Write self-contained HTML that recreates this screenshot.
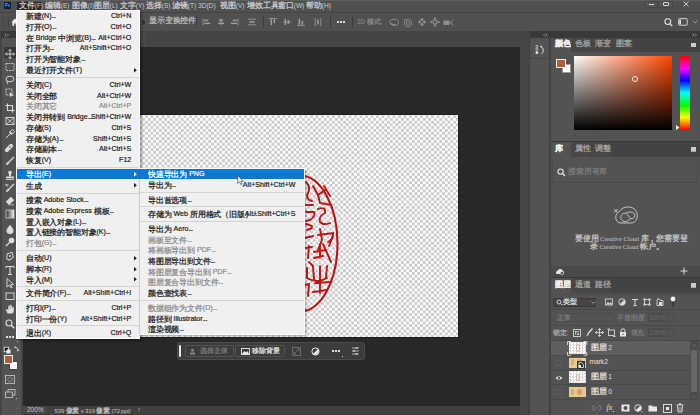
<!DOCTYPE html><html><head><meta charset="utf-8"><style>
html,body{margin:0;padding:0;}
body{width:700px;height:415px;overflow:hidden;position:relative;background:#282828;font-family:"Liberation Sans",sans-serif;}
div{position:absolute;box-sizing:border-box;}
.t{white-space:nowrap;line-height:1.2;}
.e{letter-spacing:-0.55px;}
.c{font-family:"Liberation Sans",sans-serif;font-size:1.18em;line-height:0;letter-spacing:-0.02em;vertical-align:-0.06em;-webkit-text-stroke:0.25px;}
svg{position:absolute;overflow:visible;}
</style></head><body>
<div style="left:0px;top:0px;width:700px;height:31px;background:#505050;"></div>
<div style="left:0px;top:0px;width:700px;height:12.5px;background:#505050;"></div>
<div style="left:0px;top:0px;width:700px;height:1.2px;background:#5e5e5e;"></div>
<div style="left:0px;top:12.2px;width:700px;height:1.3px;background:#444444;"></div>
<div style="left:4px;top:2px;width:7px;height:6.5px;background:#001e36;border-radius:1px;"><div class="t" style="left:0.8px;top:0.6px;font-size:4.6px;font-weight:bold;color:#31a8ff;">Ps</div></div>
<div style="left:17px;top:1.8px;width:23.5px;height:7.8px;background:#262626;"></div>
<div class="t" style="left:19px;top:1.51px;font-size:6.6px;color:#cfcfcf;"><span class="c">文件</span>(F)</div>
<div class="t" style="left:45px;top:1.51px;font-size:6.6px;color:#cfcfcf;"><span class="c">编辑</span>(E)</div>
<div class="t" style="left:72px;top:1.51px;font-size:6.6px;color:#cfcfcf;"><span class="c">图像</span>(I)</div>
<div class="t" style="left:94px;top:1.51px;font-size:6.6px;color:#cfcfcf;"><span class="c">图层</span>(L)</div>
<div class="t" style="left:120px;top:1.51px;font-size:6.6px;color:#cfcfcf;"><span class="c">文字</span>(Y)</div>
<div class="t" style="left:146px;top:1.51px;font-size:6.6px;color:#cfcfcf;"><span class="c">选择</span>(S)</div>
<div class="t" style="left:172px;top:1.51px;font-size:6.6px;color:#cfcfcf;"><span class="c">滤镜</span>(T)</div>
<div class="t" style="left:198px;top:1.51px;font-size:6.6px;color:#cfcfcf;">3D(D)</div>
<div class="t" style="left:220px;top:1.51px;font-size:6.6px;color:#cfcfcf;"><span class="c">视图</span>(V)</div>
<div class="t" style="left:247px;top:1.51px;font-size:6.6px;color:#cfcfcf;"><span class="c">增效工具</span></div>
<div class="t" style="left:278px;top:1.51px;font-size:6.6px;color:#cfcfcf;"><span class="c">窗口</span>(W)</div>
<div class="t" style="left:306px;top:1.51px;font-size:6.6px;color:#cfcfcf;"><span class="c">帮助</span>(H)</div>
<div style="left:644.7px;top:0.6px;width:13.7px;height:7.6px;background:#555555;border:0.7px solid #474747;border-radius:1px;"></div>
<div style="left:658.4px;top:0.6px;width:15px;height:7.6px;background:#555555;border:0.7px solid #474747;border-radius:1px;"></div>
<div style="left:649px;top:4.3px;width:5.1px;height:1.2px;background:#d6d6d6;"></div>
<div style="left:663.2px;top:2.2px;width:5.8px;height:3.4px;border:1px solid #d6d6d6;border-radius:1px;"></div>
<svg style="left:682.5px;top:1.2px" width="7" height="6"><path d="M0.6 0.5L5.6 5.3M5.6 0.5L0.6 5.3" stroke="#dcdcdc" stroke-width="0.9"/></svg>
<div style="left:3.4px;top:16.5px;width:1px;height:10px;background:#434343;"></div>
<div style="left:7.5px;top:16.5px;width:1px;height:10px;background:#434343;"></div>
<svg style="left:10.5px;top:17.5px" width="8" height="8"><path d="M0.3 4.2L4 0.6L7.7 4.2H6.6V7.8H4.8V5.4H3.2V7.8H1.4V4.2Z" fill="#ececec"/></svg>
<div style="left:140.5px;top:19.2px;width:5px;height:6.5px;background:#333;border:0.8px solid #5c5c5c;border-radius:1px;"></div>
<div class="t" style="left:149px;top:17.26px;font-size:7px;color:#bdbdbd;"><span class="c">显示变换控件</span></div>
<div style="left:196px;top:15.5px;width:0.9px;height:12.5px;background:#3c3c3c;"></div>
<div style="left:263px;top:15.5px;width:0.9px;height:12.5px;background:#3c3c3c;"></div>
<div style="left:330px;top:15.5px;width:0.9px;height:12.5px;background:#3c3c3c;"></div>
<div style="left:352px;top:15.5px;width:0.9px;height:12.5px;background:#3c3c3c;"></div>
<svg style="left:201.5px;top:17.2px" width="10" height="10"><path d="M1 1.5V8.5" stroke="#9e9e9e" stroke-width="0.8"/><rect x="2.2" y="2.6" width="4" height="1.5" fill="#9e9e9e"/><rect x="2.2" y="5.6" width="6" height="1.5" fill="#9e9e9e"/></svg>
<svg style="left:215.5px;top:17.2px" width="10" height="10"><path d="M5 1.5V8.5" stroke="#9e9e9e" stroke-width="0.8"/><rect x="3" y="2.6" width="4" height="1.5" fill="#9e9e9e"/><rect x="2" y="5.6" width="6" height="1.5" fill="#9e9e9e"/></svg>
<svg style="left:229.4px;top:17.2px" width="10" height="10"><path d="M9 1.5V8.5" stroke="#9e9e9e" stroke-width="0.8"/><rect x="3.8" y="2.6" width="4" height="1.5" fill="#9e9e9e"/><rect x="1.8" y="5.6" width="6" height="1.5" fill="#9e9e9e"/></svg>
<svg style="left:246.6px;top:17.2px" width="10" height="10"><path d="M1 2.2H9M1 7.8H9" stroke="#9e9e9e" stroke-width="0.8"/><rect x="2.5" y="4.2" width="5" height="1.6" fill="#9e9e9e"/></svg>
<svg style="left:268px;top:17.2px" width="10" height="10"><path d="M1 1.5H9" stroke="#9e9e9e" stroke-width="0.8"/><rect x="2.6" y="2.2" width="1.5" height="6" fill="#9e9e9e"/><rect x="5.6" y="2.2" width="1.5" height="4" fill="#9e9e9e"/></svg>
<svg style="left:282px;top:17.2px" width="10" height="10"><path d="M1 5H9" stroke="#9e9e9e" stroke-width="0.8"/><rect x="2.6" y="2" width="1.5" height="6" fill="#9e9e9e"/><rect x="5.6" y="3" width="1.5" height="4" fill="#9e9e9e"/></svg>
<svg style="left:296px;top:17.2px" width="10" height="10"><path d="M1 8.5H9" stroke="#9e9e9e" stroke-width="0.8"/><rect x="2.6" y="1.8" width="1.5" height="6" fill="#9e9e9e"/><rect x="5.6" y="3.8" width="1.5" height="4" fill="#9e9e9e"/></svg>
<svg style="left:313px;top:17.2px" width="10" height="10"><path d="M2.2 1V9M7.8 1V9" stroke="#9e9e9e" stroke-width="0.8"/><rect x="4.2" y="2.5" width="1.6" height="5" fill="#9e9e9e"/></svg>
<div style="left:337.2px;top:21.2px;width:1.6px;height:1.6px;background:#dcdcdc;"></div>
<div style="left:340.2px;top:21.2px;width:1.6px;height:1.6px;background:#dcdcdc;"></div>
<div style="left:343.2px;top:21.2px;width:1.6px;height:1.6px;background:#dcdcdc;"></div>
<div class="t" style="left:357px;top:18.09px;font-size:6.3px;color:#8a8a8a;">3D <span class="c">模式</span>:</div>
<svg style="left:388px;top:17px" width="12" height="10"><path d="M2 4.5Q3 1.5 6 2.5Q8.5 0.8 10 3.5Q11.5 6 9.5 8Q7 9 4.5 8Q1.5 7.5 2 4.5Z" fill="none" stroke="#8e8e8e" stroke-width="0.9"/><path d="M3 6.5Q5 8.5 7 7" stroke="#8e8e8e" stroke-width="1.2" fill="none"/></svg>
<svg style="left:402.5px;top:17.5px" width="10" height="10"><circle cx="5" cy="5" r="3.8" fill="none" stroke="#8e8e8e" stroke-width="0.9"/><circle cx="5" cy="5" r="1.6" fill="none" stroke="#8e8e8e" stroke-width="0.9"/><path d="M1.5 1L3 2.5" stroke="#8e8e8e" stroke-width="0.9"/></svg>
<svg style="left:416.5px;top:17px" width="10" height="10"><path d="M5 0.8L6.8 2.6L5 4.4L3.2 2.6ZM5 5.6L6.8 7.4L5 9.2L3.2 7.4ZM0.8 5L2.6 3.2L4.4 5L2.6 6.8ZM5.6 5L7.4 3.2L9.2 5L7.4 6.8Z" fill="#8e8e8e"/></svg>
<svg style="left:430px;top:17px" width="10" height="10"><rect x="3.2" y="3.2" width="3.6" height="3.6" fill="none" stroke="#8e8e8e" stroke-width="0.9"/><rect x="4" y="0.5" width="2" height="2" fill="#8e8e8e"/><rect x="4" y="7.5" width="2" height="2" fill="#8e8e8e"/><rect x="0.5" y="4" width="2" height="2" fill="#8e8e8e"/><rect x="7.5" y="4" width="2" height="2" fill="#8e8e8e"/></svg>
<svg style="left:443px;top:17.5px" width="11" height="9"><rect x="0.5" y="2.5" width="6" height="4.5" fill="#8e8e8e"/><path d="M7 4.5L8 4M7 5L8 5.5M10 1.5L8.5 4.7L10 8" fill="none" stroke="#8e8e8e" stroke-width="0.8"/></svg>
<svg style="left:663.5px;top:18.3px" width="10" height="9"><circle cx="3.8" cy="3.6" r="2.9" fill="none" stroke="#e6e6e6" stroke-width="1.1"/><path d="M5.9 5.7L8.3 8.1" stroke="#e6e6e6" stroke-width="1.3"/></svg>
<svg style="left:678.3px;top:18.3px" width="10" height="8"><rect x="0.6" y="0.6" width="8.6" height="6.6" rx="0.8" fill="none" stroke="#dedede" stroke-width="0.9"/><rect x="1.3" y="1.6" width="1.7" height="4.8" fill="#dedede"/></svg>
<svg style="left:692px;top:20px" width="6" height="4"><path d="M0.5 0.5L3 3L5.5 0.5" fill="none" stroke="#aaa" stroke-width="0.8"/></svg>
<div style="left:0px;top:31px;width:530px;height:16px;background:#454545;"></div>
<div style="left:22px;top:31px;width:123px;height:15.8px;background:#4b4b4b;"></div>
<div style="left:0px;top:31px;width:22.8px;height:384px;background:#454545;"></div>
<div style="left:1px;top:31px;width:17.5px;height:6.8px;background:#383838;"></div>
<svg style="left:4px;top:32.5px" width="6" height="4"><path d="M0.5 0.5L2 2L0.5 3.5M3 0.5L4.5 2L3 3.5" fill="none" stroke="#aaa" stroke-width="0.7"/></svg>
<div style="left:1.7px;top:38px;width:19.7px;height:377px;background:#535353;"></div>
<div style="left:3.6px;top:47px;width:12.8px;height:11px;background:#383838;"></div>
<div style="left:22.8px;top:46.8px;width:497.2px;height:359.3px;background:#282828;"></div>
<div style="left:22px;top:405.7px;width:506px;height:9.3px;background:#404040;"></div>
<div style="left:22px;top:405.7px;width:25px;height:9.3px;background:#474747;"></div>
<div class="t" style="left:27px;top:406.27px;font-size:6.5px;color:#c8c8c8;">200%</div>
<div class="t" style="left:54.5px;top:406.52px;font-size:6.1px;color:#c4c4c4;letter-spacing:-0.2px;">539 <span class="c">像素</span> x 319 <span class="c">像素</span> (72 ppi)</div>
<div class="t" style="left:138px;top:405.96px;font-size:7px;color:#aaa;">›</div>
<div style="left:22px;top:413.5px;width:506px;height:1.5px;background:#3a3a3a;"></div>
<div style="left:60px;top:115px;width:398.1px;height:222px;background:repeating-conic-gradient(#cbcbcb 0 25%,#ffffff 0 50%) -0.15px 0.3px/5.5px 5.5px;box-shadow:0 0 0 0.9px #1c1c1c;"></div>
<svg style="left:0px;top:0px" width="700" height="415"><g fill="none" stroke="#bf1212" stroke-linecap="round"><ellipse cx="300" cy="243.5" rx="37.5" ry="68" stroke-width="2.1"/><g stroke-width="1.9"><path d="M306 182Q311 187 308 193Q305 199 312 201"/><path d="M313 186L318 195L325 190M318 195L320 203L331 205"/><path d="M306 205L313 205M306 212L314 212Q316 216 310 220L306 221"/><path d="M318 209Q326 206 325 213Q318 216 320 222Q324 226 330 223"/><path d="M307 230L312 228M305 238L313 236M318 235L333 233Q333 240 328 242"/><path d="M320 229L322 240L318 250M323 244L331 262"/><path d="M306 248L312 247M309 246L308 258M314 252L326 250M320 244L320 258M314 258L323 256"/><path d="M307 268L307 278M313 267L314 279M320 266L320 281M327 266L326 278"/><path d="M307 278Q317 284 327 278M315 283L331 282M320 280L320 293M313 292L327 290M305 285L309 284L308 296"/><path d="M324 186L330 196M309 262L313 266M329 246L333 236M306 224L312 226"/></g></g></svg>
<div style="left:177px;top:342px;width:188px;height:17.8px;background:#3c3c3c;border-radius:2.5px;border:0.8px solid #4c4c4c;"></div>
<div style="left:178.6px;top:344.6px;width:2.4px;height:12.8px;background:#e8e8e8;border-radius:1px;"></div>
<div style="left:185px;top:345px;width:48.6px;height:12px;border:0.8px solid #525252;border-radius:1.5px;"></div>
<svg style="left:189px;top:347.5px" width="7" height="7"><circle cx="3.5" cy="2.3" r="1.5" fill="#888"/><rect x="1" y="4.5" width="5" height="2" fill="#888"/></svg>
<div class="t" style="left:200px;top:347.36px;font-size:6.2px;color:#7a7a7a;"><span class="c">选择主体</span></div>
<div style="left:235px;top:345px;width:50px;height:12px;border:0.8px solid #525252;border-radius:1.5px;"></div>
<svg style="left:241px;top:347.5px" width="9" height="7"><rect x="0.5" y="0.5" width="8" height="6" fill="none" stroke="#eee" stroke-width="0.9"/><path d="M1 6L3.5 3L5 4.5L6.5 3L8 6Z" fill="#eee"/></svg>
<div class="t" style="left:252px;top:347.36px;font-size:6.2px;color:#e0e0e0;"><span class="c">移除背景</span></div>
<svg style="left:292px;top:347px" width="9" height="9"><rect x="0.5" y="0.5" width="8" height="8" fill="none" stroke="#777" stroke-width="0.8"/><path d="M2 7L7 2M5 2H7V4M2 5V7H4" fill="none" stroke="#777" stroke-width="0.8"/></svg>
<svg style="left:311px;top:347px" width="9" height="9"><circle cx="4.5" cy="4.5" r="3.6" fill="none" stroke="#eee" stroke-width="1"/><path d="M4.5 0.9A3.6 3.6 0 0 0 4.5 8.1" fill="none"/><path d="M7 2L2 7A3.6 3.6 0 0 0 7 2Z" fill="#eee"/></svg>
<div style="left:332.2px;top:350.2px;width:1.6px;height:1.6px;background:#e0e0e0;"></div>
<div style="left:335.2px;top:350.2px;width:1.6px;height:1.6px;background:#e0e0e0;"></div>
<div style="left:338.2px;top:350.2px;width:1.6px;height:1.6px;background:#e0e0e0;"></div>
<div style="left:341.5px;top:356px;width:1.3px;height:1.3px;background:#ddd;"></div>
<svg style="left:351px;top:346px" width="9" height="10"><path d="M1 2H8M1 5H8M1 8H8" stroke="#ccc" stroke-width="0.8"/><circle cx="5.5" cy="2" r="1" fill="#ccc"/><circle cx="3" cy="5" r="1" fill="#ccc"/><circle cx="5.5" cy="8" r="1" fill="#ccc"/></svg>
<div style="left:520px;top:46.8px;width:9px;height:368.2px;background:#474747;"></div>
<div style="left:529px;top:37.5px;width:1.4px;height:377.5px;background:#3e3e3e;"></div>
<div style="left:530px;top:31px;width:170px;height:6.5px;background:#393939;"></div>
<svg style="left:543px;top:32.5px" width="6" height="4"><path d="M2 0.5L0.5 2L2 3.5M4.5 0.5L3 2L4.5 3.5" fill="none" stroke="#aaa" stroke-width="0.7"/></svg>
<svg style="left:692px;top:32.5px" width="6" height="4"><path d="M0.5 0.5L2 2L0.5 3.5M3 0.5L4.5 2L3 3.5" fill="none" stroke="#aaa" stroke-width="0.7"/></svg>
<div style="left:530px;top:37.5px;width:19.5px;height:377.5px;background:#535353;"></div>
<div style="left:530px;top:57.8px;width:19.5px;height:1.4px;background:#454545;"></div>
<svg style="left:534.5px;top:44.5px" width="10" height="10"><circle cx="1.9" cy="1.4" r="1.1" fill="none" stroke="#d8d8d8" stroke-width="0.7"/><circle cx="1.9" cy="4.2" r="1.1" fill="none" stroke="#d8d8d8" stroke-width="0.7"/><rect x="0.7" y="6.4" width="2.4" height="2.4" fill="#f2f2f2"/><path d="M6 1.5Q9 3.5 8.2 6.5Q7.8 8 6.3 8.8" fill="none" stroke="#f0f0f0" stroke-width="0.9"/><path d="M5.6 0.5L7.3 1.3L5.8 2.8Z" fill="#f0f0f0"/></svg>
<div style="left:549.2px;top:37.5px;width:1.6px;height:377.5px;background:#434343;"></div>
<div style="left:551.3px;top:37.5px;width:148.7px;height:377.5px;background:#535353;"></div>
<div style="left:551.3px;top:37.5px;width:148.7px;height:14.4px;background:#434343;"></div>
<div style="left:551.3px;top:37.5px;width:19.700000000000045px;height:14.4px;background:#535353;"></div>
<div class="t" style="left:555.0999999999999px;top:40.48px;font-size:6.8px;color:#f2f2f2;font-weight:bold;"><span class="c">颜色</span></div>
<div style="left:571px;top:37.5px;width:19.7px;height:14.4px;background:#474747;"></div>
<div class="t" style="left:574.8px;top:40.48px;font-size:6.8px;color:#a8a8a8;"><span class="c">色板</span></div>
<div style="left:591.5px;top:37.5px;width:19.7px;height:14.4px;background:#474747;"></div>
<div class="t" style="left:595.3px;top:40.48px;font-size:6.8px;color:#a8a8a8;"><span class="c">渐变</span></div>
<div style="left:612px;top:37.5px;width:20.800000000000022px;height:14.4px;background:#474747;"></div>
<div class="t" style="left:615.8px;top:40.48px;font-size:6.8px;color:#a8a8a8;"><span class="c">图案</span></div>
<div style="left:690.5px;top:42.9px;width:5.5px;height:4.6px;background:repeating-linear-gradient(#cdcdcd 0 0.8px,#a8a8a8 0.8px 1.15px);"></div>
<div style="left:556.4px;top:58.6px;width:9.2px;height:9px;background:#b5583b;border:0.9px solid #f0f0f0;"></div>
<div style="left:561.5px;top:63.5px;width:9.5px;height:9.5px;background:#ffffff;border:0.5px solid #999;"></div>
<div style="left:556.4px;top:58.6px;width:9.2px;height:9px;background:#b5583b;border:0.9px solid #f0f0f0;"></div>
<div style="left:574px;top:56px;width:97.7px;height:73.8px;background:linear-gradient(to bottom,rgba(0,0,0,0),#000),linear-gradient(to right,#fff,#ff4500);"></div>
<div style="left:632px;top:76px;width:6px;height:6px;border:0.9px solid #e8e8e8;border-radius:50%;"></div>
<div style="left:680.3px;top:56px;width:9.7px;height:73.8px;background:linear-gradient(to bottom,#ff0000 0%,#ff00ff 17%,#0000ff 33%,#00ffff 50%,#00ff00 67%,#ffff00 83%,#ff0000 100%);"></div>
<svg style="left:676px;top:125px" width="4" height="5"><path d="M0 0L3.5 2.5L0 5Z" fill="#eee"/></svg>
<div style="left:551.3px;top:140.6px;width:148.7px;height:1.2px;background:#383838;"></div>
<div style="left:551.3px;top:141.8px;width:148.7px;height:14.9px;background:#434343;"></div>
<div style="left:551.3px;top:141.8px;width:19.700000000000045px;height:14.9px;background:#535353;"></div>
<div class="t" style="left:555.0999999999999px;top:145.03px;font-size:6.8px;color:#f2f2f2;font-weight:bold;"><span class="c">库</span></div>
<div style="left:571px;top:141.8px;width:19.7px;height:14.9px;background:#474747;"></div>
<div class="t" style="left:574.8px;top:145.03px;font-size:6.8px;color:#a8a8a8;"><span class="c">属性</span></div>
<div style="left:591.5px;top:141.8px;width:19.7px;height:14.9px;background:#474747;"></div>
<div class="t" style="left:595.3px;top:145.03px;font-size:6.8px;color:#a8a8a8;"><span class="c">调整</span></div>
<div style="left:690.5px;top:147.20000000000002px;width:5.5px;height:4.6px;background:repeating-linear-gradient(#cdcdcd 0 0.8px,#a8a8a8 0.8px 1.15px);"></div>
<svg style="left:556.5px;top:167.5px" width="9" height="9"><circle cx="3.6" cy="3.6" r="2.6" fill="none" stroke="#eaeaea" stroke-width="1.1"/><path d="M5.5 5.5L8 8" stroke="#eaeaea" stroke-width="1.3"/></svg>
<div class="t" style="left:568px;top:167.83px;font-size:6.4px;color:#7d7d7d;"><span class="c">搜索所有库</span></div>
<div style="left:552.2px;top:158.5px;width:146px;height:24.8px;border:0.8px solid #4a4a4a;border-top:none;"></div>
<svg style="left:0px;top:0px" width="700" height="415"><g fill="none" stroke="#cfcfcf" stroke-width="0.9"><path d="M620 223C614.5 222 614.2 213.5 619.8 211.2C622 206 633.5 205 636.3 211.5C638.8 216.5 636.5 223 630.5 223Z"/><path d="M628.2 220.4A4.3 4.3 0 1 1 626.2 213.2L630.6 218.6A3.3 3.3 0 1 0 630.9 212.2"/><path d="M628.2 220.4L630.6 218.6M626.2 213.2Q628.5 211.2 630.9 212.2"/></g><path d="M614 209L617.5 212.5M617.5 209L614 212.5" stroke="#e0e0e0" stroke-width="0.9"/></svg>
<div class="t" style="left:575px;top:234.53px;font-size:6.4px;color:#c8c8c8;font-family:'Liberation Serif',serif;"><span class="c">要使用</span> Creative Cloud <span class="c">库，您需要登</span></div>
<div class="t" style="left:590px;top:242.53px;font-size:6.4px;color:#c8c8c8;font-family:'Liberation Serif',serif;"><span class="c">录</span> Creative Cloud <span class="c">帐户。</span></div>
<div style="left:551.3px;top:265.7px;width:148.7px;height:11px;background:#4a4a4a;"></div>
<svg style="left:555px;top:268px" width="10" height="7"><path d="M1.5 6A2 2 0 0 1 2.5 2.8A3 3 0 0 1 8 3A1.8 1.8 0 0 1 8.5 6Z" fill="#e6e6e6"/><circle cx="7" cy="5" r="1.6" fill="#4a4a4a" stroke="#e6e6e6" stroke-width="0.6"/></svg>
<svg style="left:680px;top:267px" width="9" height="8"><path d="M4 0.5V7.5M0.5 4H7.5" stroke="#e6e6e6" stroke-width="0.9"/></svg>
<div style="left:551.3px;top:276.7px;width:148.7px;height:1px;background:#383838;"></div>
<div style="left:551.3px;top:277.7px;width:148.7px;height:15.8px;background:#434343;"></div>
<div style="left:551.3px;top:277.7px;width:19.700000000000045px;height:15.8px;background:#535353;"></div>
<div class="t" style="left:555.0999999999999px;top:281.38px;font-size:6.8px;color:#f2f2f2;font-weight:bold;"><span class="c">图层</span></div>
<div style="left:571px;top:277.7px;width:19.7px;height:15.8px;background:#474747;"></div>
<div class="t" style="left:574.8px;top:281.38px;font-size:6.8px;color:#a8a8a8;"><span class="c">通道</span></div>
<div style="left:591.5px;top:277.7px;width:19.7px;height:15.8px;background:#474747;"></div>
<div class="t" style="left:595.3px;top:281.38px;font-size:6.8px;color:#a8a8a8;"><span class="c">路径</span></div>
<div style="left:690.5px;top:283.09999999999997px;width:5.5px;height:4.6px;background:repeating-linear-gradient(#cdcdcd 0 0.8px,#a8a8a8 0.8px 1.15px);"></div>
<div style="left:551.3px;top:294px;width:148.7px;height:0.8px;background:#484848;"></div>
<div style="left:553.4px;top:297.5px;width:43px;height:9.5px;background:#454545;border:0.7px solid #3a3a3a;"></div>
<svg style="left:556px;top:299.2px" width="7" height="7"><circle cx="3" cy="3" r="2" fill="none" stroke="#e0e0e0" stroke-width="0.9"/><path d="M4.5 4.5L6.5 6.5" stroke="#e0e0e0" stroke-width="1"/></svg>
<div class="t" style="left:563px;top:298.39px;font-size:6.3px;color:#dedede;"><span class="c">类型</span></div>
<svg style="left:591px;top:301px" width="5" height="3"><path d="M0.5 0.5L2.5 2.5L4.5 0.5" fill="none" stroke="#bbb" stroke-width="0.7"/></svg>
<svg style="left:605px;top:298px" width="8" height="8"><rect x="0.5" y="1" width="7" height="6" fill="none" stroke="#ddd" stroke-width="0.8"/><path d="M1 6.5L3 4L4.5 5.5L6 4L7 6.5Z" fill="#ddd"/></svg>
<svg style="left:617.5px;top:298px" width="8" height="8"><circle cx="4" cy="4" r="3.2" fill="none" stroke="#ddd" stroke-width="0.9"/><path d="M6.3 1.7L1.7 6.3A3.2 3.2 0 0 0 6.3 1.7Z" fill="#ddd"/></svg>
<svg style="left:630.5px;top:298px" width="8" height="8"><path d="M1 1.5H7M4 1.5V7.5M2.5 7.5H5.5" stroke="#ddd" stroke-width="1"/></svg>
<svg style="left:642.5px;top:298px" width="8" height="8"><rect x="1.5" y="1.5" width="5" height="5" fill="none" stroke="#ddd" stroke-width="0.8"/><rect x="0.5" y="0.5" width="2" height="2" fill="#ddd"/><rect x="5.5" y="0.5" width="2" height="2" fill="#ddd"/><rect x="0.5" y="5.5" width="2" height="2" fill="#ddd"/><rect x="5.5" y="5.5" width="2" height="2" fill="#ddd"/></svg>
<svg style="left:655.5px;top:298px" width="8" height="8"><path d="M1 3.5V7.5H7V2.5H4.5L3.5 1H1.5Z" fill="none" stroke="#ddd" stroke-width="0.9"/><rect x="3" y="4" width="3" height="3" fill="#ddd"/></svg>
<svg style="left:670px;top:296px" width="6" height="12"><circle cx="3" cy="3" r="2.4" fill="#f0f0f0"/><rect x="1.8" y="6" width="2.4" height="5" rx="1" fill="#3a3a3a"/></svg>
<div style="left:551.3px;top:309px;width:148.7px;height:0.8px;background:#484848;"></div>
<div style="left:553.4px;top:313px;width:60px;height:9.3px;border:0.7px solid #4d4d4d;"></div>
<div class="t" style="left:557px;top:313.69px;font-size:6.3px;color:#7b7b7b;"><span class="c">正常</span></div>
<svg style="left:608px;top:316.5px" width="5" height="3"><path d="M0.5 0.5L2.5 2.5L4.5 0.5" fill="none" stroke="#6a6a6a" stroke-width="0.7"/></svg>
<div class="t" style="left:617px;top:313.69px;font-size:6.3px;color:#7b7b7b;"><span class="c">不透明度</span>:</div>
<div style="left:647.6px;top:313px;width:17.8px;height:9.3px;background:#4b4b4b;"></div>
<div class="t" style="left:649px;top:313.69px;font-size:6.3px;color:#6c6c6c;">100%</div>
<div style="left:667px;top:313px;width:7px;height:9.3px;border:0.7px solid #4d4d4d;"></div>
<div style="left:551.3px;top:325px;width:148.7px;height:0.8px;background:#484848;"></div>
<div class="t" style="left:553px;top:328.69px;font-size:6.3px;color:#a8a8a8;"><span class="c">锁定</span>:</div>
<svg style="left:573px;top:328.5px" width="8" height="8"><rect x="0.5" y="0.5" width="7" height="7" fill="none" stroke="#e6e6e6" stroke-width="0.8"/><rect x="2" y="2" width="1.6" height="1.6" fill="#e6e6e6"/><rect x="4.4" y="4.4" width="1.6" height="1.6" fill="#e6e6e6"/><rect x="4.4" y="2" width="1.2" height="1.2" fill="#e6e6e6"/><rect x="2" y="4.4" width="1.2" height="1.2" fill="#e6e6e6"/></svg>
<svg style="left:584.5px;top:328px" width="8" height="9"><path d="M7.5 0.5L3 5.5" stroke="#e6e6e6" stroke-width="1.2"/><path d="M3 5L1 8.5L4 6.5Z" fill="#e6e6e6"/></svg>
<svg style="left:595px;top:328px" width="9" height="9"><path d="M4.5 0.5V8.5M0.5 4.5H8.5M3 2L4.5 0.5L6 2M3 7L4.5 8.5L6 7M2 3L0.5 4.5L2 6M7 3L8.5 4.5L7 6" fill="none" stroke="#e6e6e6" stroke-width="0.8"/></svg>
<svg style="left:607px;top:328px" width="9" height="9"><rect x="1.5" y="2" width="6" height="5.5" fill="none" stroke="#e6e6e6" stroke-width="0.8"/><path d="M0.5 1H3M6 8.5H8.5" stroke="#e6e6e6" stroke-width="0.8"/></svg>
<svg style="left:618.5px;top:328px" width="8" height="9"><path d="M2 4V2.8A2 2 0 0 1 6 2.8V4" fill="none" stroke="#e6e6e6" stroke-width="0.9"/><rect x="1" y="4" width="6" height="4.5" fill="#e6e6e6"/><rect x="3.5" y="5.5" width="1" height="1.5" fill="#535353"/></svg>
<div class="t" style="left:630.5px;top:328.69px;font-size:6.3px;color:#7b7b7b;"><span class="c">填充</span>:</div>
<div style="left:647.6px;top:328px;width:17.8px;height:9.3px;background:#4b4b4b;"></div>
<div class="t" style="left:649px;top:328.69px;font-size:6.3px;color:#6c6c6c;">100%</div>
<div style="left:667px;top:328px;width:7px;height:9.3px;border:0.7px solid #4d4d4d;"></div>
<div style="left:551.3px;top:339.5px;width:148.7px;height:0.8px;background:#484848;"></div>
<div style="left:551.3px;top:340.7px;width:138.5px;height:14.3px;background:#5f5f5f;"></div>
<div style="left:551.3px;top:355.0px;width:138.5px;height:0.7px;background:#4a4a4a;"></div>
<div style="left:555.3px;top:345.2px;width:6.7px;height:6px;border:0.6px solid #5c5c5c;"></div>
<div style="left:568.7px;top:341.9px;width:17.3px;height:11.8px;background:repeating-conic-gradient(#dcdcdc 0 25%,#ffffff 0 50%) 0 0/3px 3px;"></div>
<div style="left:575.7px;top:344.2px;width:4.5px;height:7.5px;border:1px solid rgba(200,90,70,0.35);border-radius:50%;"></div>
<svg style="left:567.2px;top:340.5px" width="21" height="15"><path d="M0.5 4V0.5H4M16.5 0.5H19.8V4M19.8 11V14.3H16.5M4 14.3H0.5V11" fill="none" stroke="#e8e8e8" stroke-width="0.8"/></svg>
<div class="t" style="left:590.7px;top:343.81px;font-size:6.6px;color:#e4e4e4;"><span class="c">图层</span> 2</div>
<div style="left:551.3px;top:369.5px;width:138.5px;height:0.7px;background:#4a4a4a;"></div>
<div style="left:555.3px;top:359.7px;width:6.7px;height:6px;border:0.6px solid #5c5c5c;"></div>
<div style="left:569.1px;top:357.5px;width:16.5px;height:10px;background:#e8ca8c;"></div>
<div style="left:570.7px;top:359.2px;width:3px;height:6px;background:rgba(190,120,80,0.35);"></div>
<div style="left:577.2px;top:359.2px;width:5px;height:6.5px;background:rgba(205,95,70,0.45);border-radius:50%;"></div>
<div style="left:577.0px;top:360.7px;width:8px;height:8px;background:#333333;"></div>
<svg style="left:578.0px;top:361.7px" width="6" height="6"><path d="M1 0.5H3.5L5.5 2.5V5.5H1Z" fill="none" stroke="#f0f0f0" stroke-width="0.8"/><rect x="0.5" y="3" width="2.5" height="2.5" fill="#f0f0f0"/></svg>
<div class="t" style="left:589.5px;top:358.31px;font-size:6.6px;color:#e4e4e4;">mark2</div>
<div style="left:551.3px;top:384.3px;width:138.5px;height:0.7px;background:#4a4a4a;"></div>
<svg style="left:555px;top:374.5px" width="8" height="6"><path d="M0.5 3Q4 -0.5 7.5 3Q4 6.5 0.5 3Z" fill="#f0f0f0"/><circle cx="4" cy="3" r="1.3" fill="#535353"/></svg>
<div style="left:568.7px;top:371.2px;width:17.3px;height:11.8px;background:repeating-conic-gradient(#dcdcdc 0 25%,#ffffff 0 50%) 0 0/3px 3px;"></div>
<div style="left:575.7px;top:373.5px;width:4.5px;height:7.5px;border:1px solid rgba(200,90,70,0.35);border-radius:50%;"></div>
<div class="t" style="left:590.7px;top:373.11px;font-size:6.6px;color:#e4e4e4;"><span class="c">图层</span> 1</div>
<div style="left:551.3px;top:399.1px;width:138.5px;height:0.7px;background:#4a4a4a;"></div>
<div style="left:555.3px;top:389.3px;width:6.7px;height:6px;border:0.6px solid #5c5c5c;"></div>
<div style="left:569.1px;top:387.1px;width:16.5px;height:10px;background:#e8ca8c;"></div>
<div style="left:570.7px;top:388.8px;width:3px;height:6px;background:rgba(190,120,80,0.35);"></div>
<div style="left:577.2px;top:388.8px;width:5px;height:6.5px;background:rgba(205,95,70,0.45);border-radius:50%;"></div>
<div class="t" style="left:590.7px;top:387.91px;font-size:6.6px;color:#e4e4e4;"><span class="c">图层</span> 0</div>
<div style="left:690px;top:341px;width:8.3px;height:59px;background:#4b4b4b;"></div>
<div style="left:691.3px;top:349.5px;width:6px;height:42.5px;background:#676767;border-radius:1px;"></div>
<svg style="left:692px;top:344px" width="5" height="3"><path d="M0.5 2.5L2.5 0.7L4.5 2.5" fill="none" stroke="#8a8a8a" stroke-width="0.6"/></svg>
<svg style="left:692px;top:394.5px" width="5" height="3"><path d="M0.5 0.5L2.5 2.3L4.5 0.5" fill="none" stroke="#7a7a7a" stroke-width="0.6"/></svg>
<div style="left:551.3px;top:400px;width:148.7px;height:15px;background:#535353;"></div>
<svg style="left:592px;top:404.5px" width="9" height="6"><path d="M3 1H2A2 2 0 0 0 2 5H3M6 1H7A2 2 0 0 1 7 5H6M3 3H6" fill="none" stroke="#888" stroke-width="0.8"/></svg>
<div class="t" style="left:606.5px;top:402.54px;font-size:8px;color:#e6e6e6;font-family:'Liberation Serif',serif;"><i>fx</i></div>
<div style="left:613px;top:410.5px;width:1px;height:1px;background:#ddd;"></div>
<svg style="left:621px;top:403.5px" width="9" height="8"><rect x="0.5" y="0.5" width="8" height="7" fill="#e6e6e6"/><circle cx="4.5" cy="4" r="2" fill="#535353"/></svg>
<svg style="left:634px;top:403.5px" width="9" height="9"><circle cx="4" cy="4" r="3.3" fill="none" stroke="#e6e6e6" stroke-width="0.9"/><path d="M6.3 1.7L1.7 6.3A3.2 3.2 0 0 0 6.3 1.7Z" fill="#e6e6e6"/><rect x="7.5" y="7.5" width="1" height="1" fill="#ddd"/></svg>
<svg style="left:647.5px;top:404px" width="10" height="8"><path d="M0.5 1.5H4L5 2.5H9V7.5H0.5Z" fill="#e6e6e6"/></svg>
<svg style="left:662.5px;top:403.5px" width="9" height="9"><rect x="0.5" y="0.5" width="8" height="8" fill="none" stroke="#e6e6e6" stroke-width="0.9"/><rect x="3" y="3" width="3" height="3" fill="#e6e6e6"/></svg>
<svg style="left:676px;top:403px" width="8" height="10"><path d="M0.5 2H7.5M3 2V0.8H5V2M1.5 2.5L2 9H6L6.5 2.5" fill="none" stroke="#e6e6e6" stroke-width="0.9"/><path d="M3 4V8M5 4V8" stroke="#e6e6e6" stroke-width="0.6"/></svg>
<svg style="left:5px;top:48.7px" width="10" height="10"><path d="M5 0.5V9.5M0.5 5H9.5M3.5 2L5 0.5L6.5 2M3.5 8L5 9.5L6.5 8M2 3.5L0.5 5L2 6.5M8 3.5L9.5 5L8 6.5" fill="none" stroke="#dcdcdc" stroke-width="0.9"/></svg>
<svg style="left:5px;top:62px" width="10" height="10"><rect x="1" y="1.5" width="8" height="7" fill="none" stroke="#dcdcdc" stroke-width="0.9" stroke-dasharray="1.6 1"/></svg>
<svg style="left:5px;top:75.4px" width="10" height="10"><ellipse cx="5" cy="4" rx="4" ry="2.8" fill="none" stroke="#dcdcdc" stroke-width="0.9"/><path d="M2 6Q1.5 8.5 3 9" fill="none" stroke="#dcdcdc" stroke-width="0.9"/></svg>
<svg style="left:5px;top:88.4px" width="10" height="10"><rect x="1" y="1" width="6" height="6" fill="none" stroke="#dcdcdc" stroke-width="0.9" stroke-dasharray="1.5 0.8"/><path d="M4.5 4L9 7.5L6.5 7.8L5.5 9.5Z" fill="#dcdcdc"/></svg>
<svg style="left:5px;top:103px" width="10" height="10"><path d="M2.5 0.5V7.5H9.5M0.5 2.5H7.5V9.5" fill="none" stroke="#dcdcdc" stroke-width="1.1"/></svg>
<svg style="left:5px;top:116px" width="10" height="10"><rect x="1" y="1.5" width="8" height="7" fill="none" stroke="#dcdcdc" stroke-width="0.9"/><path d="M1 1.5L9 8.5M9 1.5L1 8.5" stroke="#dcdcdc" stroke-width="0.8"/></svg>
<svg style="left:5px;top:128.5px" width="10" height="10"><path d="M1 9L6 4M5 2.5L7.5 0.5L9.5 2.5L7.5 5Z" fill="none" stroke="#dcdcdc" stroke-width="1"/><path d="M4.5 3L7 5.5" stroke="#dcdcdc" stroke-width="1.4"/></svg>
<svg style="left:5px;top:142px" width="10" height="10"><rect x="-1.5" y="3" width="10" height="4" rx="2" transform="rotate(-45 5 5)" fill="#dcdcdc"/><circle cx="5" cy="5" r="0.8" fill="#535353"/></svg>
<svg style="left:5px;top:155.5px" width="10" height="10"><path d="M9 1L4 6" stroke="#dcdcdc" stroke-width="1.3"/><path d="M4 5.5Q1 6 1 9Q4 9 4.5 6Z" fill="#dcdcdc"/></svg>
<svg style="left:5px;top:169.5px" width="10" height="10"><circle cx="5" cy="2.5" r="1.8" fill="#dcdcdc"/><rect x="4" y="3.5" width="2" height="3" fill="#dcdcdc"/><rect x="1" y="6.5" width="8" height="1.8" fill="#dcdcdc"/><rect x="1" y="9" width="8" height="0.8" fill="#dcdcdc"/></svg>
<svg style="left:5px;top:182.8px" width="10" height="10"><path d="M9 1L4 6" stroke="#dcdcdc" stroke-width="1.2"/><path d="M4 5.5Q1 6 1 9Q4 9 4.5 6Z" fill="#dcdcdc"/><path d="M1 1.5Q3 0.5 4 2.5M1 1V3H3" fill="none" stroke="#dcdcdc" stroke-width="0.7"/></svg>
<svg style="left:5px;top:196px" width="10" height="10"><path d="M3.5 8.5L0.8 5.8L5.8 0.8L9.2 4.2L4.5 8.5Z" fill="#dcdcdc"/><path d="M3.5 8.8H9" stroke="#dcdcdc" stroke-width="0.7"/></svg>
<svg style="left:5px;top:209px" width="10" height="10"><rect x="1" y="1" width="8" height="8" fill="url(#gr)"/><rect x="1" y="1" width="8" height="8" fill="none" stroke="#dcdcdc" stroke-width="0.7"/><defs><linearGradient id="gr"><stop offset="0" stop-color="#333"/><stop offset="1" stop-color="#eee"/></linearGradient></defs></svg>
<svg style="left:5px;top:223.6px" width="10" height="10"><path d="M5 0.8Q8.5 5 8.5 6.5A3.5 3.5 0 0 1 1.5 6.5Q1.5 5 5 0.8Z" fill="#dcdcdc"/></svg>
<svg style="left:5px;top:237px" width="10" height="10"><circle cx="6.5" cy="3.5" r="2.8" fill="#dcdcdc"/><path d="M4.5 5.5L1 9" stroke="#dcdcdc" stroke-width="1.3"/></svg>
<svg style="left:5px;top:250.8px" width="10" height="10"><path d="M5 0.8L8.5 4.5L6.5 9H3.5L1.5 4.5Z" fill="none" stroke="#dcdcdc" stroke-width="0.9" transform="rotate(30 5 5)"/><circle cx="5" cy="5" r="0.9" fill="#dcdcdc"/></svg>
<svg style="left:5px;top:264.6px" width="10" height="10"><path d="M1 1.5H9M5 1.5V9.5M3 9.5H7M1 1.5V3M9 1.5V3" fill="none" stroke="#dcdcdc" stroke-width="1.1"/></svg>
<svg style="left:5px;top:277.8px" width="10" height="10"><path d="M2 0.5L8.5 6.5L5.5 6.8L7.2 9.5L6 9.8L4.5 7.2L2 9Z" fill="none" stroke="#dcdcdc" stroke-width="0.9"/></svg>
<svg style="left:5px;top:291px" width="10" height="10"><rect x="1" y="2" width="8" height="6.5" fill="none" stroke="#dcdcdc" stroke-width="0.9"/></svg>
<svg style="left:5px;top:304px" width="10" height="10"><path d="M2.5 9.5L0.8 5.5L2 5L3.2 6.5V2L4.2 1.8L4.6 5V0.8H5.8V5L6.2 1.5H7.2V5.5L7.8 3H8.8V6.5Q8.8 9.5 6.5 9.5Z" fill="#dcdcdc"/></svg>
<svg style="left:5px;top:318.5px" width="10" height="10"><circle cx="4" cy="4" r="3" fill="none" stroke="#dcdcdc" stroke-width="1.1"/><path d="M6.2 6.2L9.2 9.2" stroke="#dcdcdc" stroke-width="1.5"/></svg>
<div style="left:6.1px;top:336.2px;width:1.8px;height:1.8px;background:#dedede;"></div>
<div style="left:9.1px;top:336.2px;width:1.8px;height:1.8px;background:#dedede;"></div>
<div style="left:12.1px;top:336.2px;width:1.8px;height:1.8px;background:#dedede;"></div>
<div style="left:16.5px;top:341px;width:1px;height:1px;background:#bbb;"></div>
<svg style="left:3px;top:346px" width="16" height="8"><rect x="1.2" y="1.2" width="4.5" height="4.5" fill="#111" stroke="#eee" stroke-width="0.8"/><rect x="3.5" y="3.5" width="4" height="4" fill="#eee"/><path d="M11 1.5L12.5 0.8L12.3 2.2M12.2 1.2Q15 1.5 15 4.5M14 3.8L15 5.2L16 3.8" fill="none" stroke="#ddd" stroke-width="0.8"/></svg>
<div style="left:9px;top:361px;width:9.2px;height:9.2px;background:#fff;border:0.6px solid #444;"></div>
<div style="left:4px;top:355px;width:9px;height:9px;background:#b5583b;border:0.9px solid #eeeeee;"></div>
<svg style="left:5px;top:374.5px" width="10" height="9"><rect x="0.5" y="0.5" width="9" height="8" fill="none" stroke="#ccc" stroke-width="0.8"/><circle cx="5" cy="4.5" r="2.2" fill="none" stroke="#ccc" stroke-width="0.8" stroke-dasharray="1 0.8"/></svg>
<svg style="left:5px;top:388.5px" width="12" height="10"><rect x="3" y="0.5" width="7" height="5.5" fill="none" stroke="#ccc" stroke-width="0.8"/><rect x="0.5" y="3" width="7" height="5.5" fill="#535353" stroke="#ccc" stroke-width="0.8"/><rect x="11" y="9" width="1" height="1" fill="#bbb"/></svg>
<div style="left:17.5px;top:11.7px;width:124.19999999999999px;height:329.1px;background:rgba(0,0,0,0.35);filter:blur(1px);"></div>
<div style="left:16px;top:10.2px;width:124.19999999999999px;height:329.1px;background:#f0f0f0;border:0.8px solid #fdfdfd;"></div>
<div class="t" style="left:26px;top:12.20px;font-size:7.1px;color:#1a1a1a;-webkit-text-stroke:0.2px #1a1a1a;"><span class="c">新建</span>(N)<span class="e">...</span></div>
<div class="t" style="right:568.7px;top:12.20px;font-size:7.1px;text-align:right;color:#1a1a1a;-webkit-text-stroke:0.2px #1a1a1a;">Ctrl+N</div>
<div class="t" style="left:26px;top:22.80px;font-size:7.1px;color:#1a1a1a;-webkit-text-stroke:0.2px #1a1a1a;"><span class="c">打开</span>(O)<span class="e">...</span></div>
<div class="t" style="right:568.7px;top:22.80px;font-size:7.1px;text-align:right;color:#1a1a1a;-webkit-text-stroke:0.2px #1a1a1a;">Ctrl+O</div>
<div class="t" style="left:26px;top:33.60px;font-size:7.1px;color:#1a1a1a;-webkit-text-stroke:0.2px #1a1a1a;"><span class="c">在</span> Bridge <span class="c">中浏览</span>(B)<span class="e">...</span></div>
<div class="t" style="right:568.7px;top:33.60px;font-size:7.1px;text-align:right;color:#1a1a1a;-webkit-text-stroke:0.2px #1a1a1a;">Alt+Ctrl+O</div>
<div class="t" style="left:26px;top:44.20px;font-size:7.1px;color:#1a1a1a;-webkit-text-stroke:0.2px #1a1a1a;"><span class="c">打开为</span><span class="e">...</span></div>
<div class="t" style="right:568.7px;top:44.20px;font-size:7.1px;text-align:right;color:#1a1a1a;-webkit-text-stroke:0.2px #1a1a1a;">Alt+Shift+Ctrl+O</div>
<div class="t" style="left:26px;top:55.20px;font-size:7.1px;color:#1a1a1a;-webkit-text-stroke:0.2px #1a1a1a;"><span class="c">打开为智能对象</span><span class="e">...</span></div>
<div class="t" style="left:26px;top:66.20px;font-size:7.1px;color:#1a1a1a;-webkit-text-stroke:0.2px #1a1a1a;"><span class="c">最近打开文件</span>(T)</div>
<svg style="left:133.8px;top:67.7px" width="4" height="6"><path d="M0 0L2.8 2.3L0 4.6Z" fill="#1a1a1a"/></svg>
<div style="left:17px;top:77.2px;width:122.19999999999999px;height:0.9px;background:#d4d4d4;"></div>
<div class="t" style="left:26px;top:81.20px;font-size:7.1px;color:#1a1a1a;-webkit-text-stroke:0.2px #1a1a1a;"><span class="c">关闭</span>(C)</div>
<div class="t" style="right:568.7px;top:81.20px;font-size:7.1px;text-align:right;color:#1a1a1a;-webkit-text-stroke:0.2px #1a1a1a;">Ctrl+W</div>
<div class="t" style="left:26px;top:91.70px;font-size:7.1px;color:#1a1a1a;-webkit-text-stroke:0.2px #1a1a1a;"><span class="c">关闭全部</span></div>
<div class="t" style="right:568.7px;top:91.70px;font-size:7.1px;text-align:right;color:#1a1a1a;-webkit-text-stroke:0.2px #1a1a1a;">Alt+Ctrl+W</div>
<div class="t" style="left:26px;top:102.40px;font-size:7.1px;color:#8c8c8c;-webkit-text-stroke:0.2px #8c8c8c;"><span class="c">关闭其它</span></div>
<div class="t" style="right:568.7px;top:102.40px;font-size:7.1px;text-align:right;color:#8c8c8c;-webkit-text-stroke:0.2px #8c8c8c;">Alt+Ctrl+P</div>
<div class="t" style="left:26px;top:113.20px;font-size:7.1px;color:#1a1a1a;-webkit-text-stroke:0.2px #1a1a1a;"><span class="c">关闭并转到</span> Bridge<span class="e">...</span></div>
<div class="t" style="right:568.7px;top:113.20px;font-size:7.1px;text-align:right;color:#1a1a1a;-webkit-text-stroke:0.2px #1a1a1a;">Shift+Ctrl+W</div>
<div class="t" style="left:26px;top:123.80px;font-size:7.1px;color:#1a1a1a;-webkit-text-stroke:0.2px #1a1a1a;"><span class="c">存储</span>(S)</div>
<div class="t" style="right:568.7px;top:123.80px;font-size:7.1px;text-align:right;color:#1a1a1a;-webkit-text-stroke:0.2px #1a1a1a;">Ctrl+S</div>
<div class="t" style="left:26px;top:134.60px;font-size:7.1px;color:#1a1a1a;-webkit-text-stroke:0.2px #1a1a1a;"><span class="c">存储为</span>(A)<span class="e">...</span></div>
<div class="t" style="right:568.7px;top:134.60px;font-size:7.1px;text-align:right;color:#1a1a1a;-webkit-text-stroke:0.2px #1a1a1a;">Shift+Ctrl+S</div>
<div class="t" style="left:26px;top:145.20px;font-size:7.1px;color:#1a1a1a;-webkit-text-stroke:0.2px #1a1a1a;"><span class="c">存储副本</span><span class="e">...</span></div>
<div class="t" style="right:568.7px;top:145.20px;font-size:7.1px;text-align:right;color:#1a1a1a;-webkit-text-stroke:0.2px #1a1a1a;">Alt+Ctrl+S</div>
<div class="t" style="left:26px;top:155.80px;font-size:7.1px;color:#1a1a1a;-webkit-text-stroke:0.2px #1a1a1a;"><span class="c">恢复</span>(V)</div>
<div class="t" style="right:568.7px;top:155.80px;font-size:7.1px;text-align:right;color:#1a1a1a;-webkit-text-stroke:0.2px #1a1a1a;">F12</div>
<div style="left:17px;top:167px;width:122.19999999999999px;height:0.9px;background:#d4d4d4;"></div>
<div style="left:17px;top:168.7px;width:121.69999999999999px;height:10.5px;background:#0a78d6;"></div>
<div class="t" style="left:26px;top:170.40px;font-size:7.1px;color:#ffffff;-webkit-text-stroke:0.2px #ffffff;"><span class="c">导出</span>(E)</div>
<svg style="left:133.8px;top:171.89999999999998px" width="4" height="6"><path d="M0 0L2.8 2.3L0 4.6Z" fill="#ffffff"/></svg>
<div class="t" style="left:26px;top:181.80px;font-size:7.1px;color:#1a1a1a;-webkit-text-stroke:0.2px #1a1a1a;"><span class="c">生成</span></div>
<svg style="left:133.8px;top:183.29999999999998px" width="4" height="6"><path d="M0 0L2.8 2.3L0 4.6Z" fill="#1a1a1a"/></svg>
<div style="left:17px;top:193px;width:122.19999999999999px;height:0.9px;background:#d4d4d4;"></div>
<div class="t" style="left:26px;top:196.20px;font-size:7.1px;color:#1a1a1a;-webkit-text-stroke:0.2px #1a1a1a;"><span class="c">搜索</span> Adobe Stock<span class="e">...</span></div>
<div class="t" style="left:26px;top:206.90px;font-size:7.1px;color:#1a1a1a;-webkit-text-stroke:0.2px #1a1a1a;"><span class="c">搜索</span> Adobe Express <span class="c">模板</span><span class="e">...</span></div>
<div class="t" style="left:26px;top:217.50px;font-size:7.1px;color:#1a1a1a;-webkit-text-stroke:0.2px #1a1a1a;"><span class="c">置入嵌入对象</span>(L)<span class="e">...</span></div>
<div class="t" style="left:26px;top:228.20px;font-size:7.1px;color:#1a1a1a;-webkit-text-stroke:0.2px #1a1a1a;"><span class="c">置入链接的智能对象</span>(K)<span class="e">...</span></div>
<div class="t" style="left:26px;top:238.90px;font-size:7.1px;color:#8c8c8c;-webkit-text-stroke:0.2px #8c8c8c;"><span class="c">打包</span>(G)<span class="e">...</span></div>
<div style="left:17px;top:250px;width:122.19999999999999px;height:0.9px;background:#d4d4d4;"></div>
<div class="t" style="left:26px;top:254.20px;font-size:7.1px;color:#1a1a1a;-webkit-text-stroke:0.2px #1a1a1a;"><span class="c">自动</span>(U)</div>
<svg style="left:133.8px;top:255.7px" width="4" height="6"><path d="M0 0L2.8 2.3L0 4.6Z" fill="#1a1a1a"/></svg>
<div class="t" style="left:26px;top:265.00px;font-size:7.1px;color:#1a1a1a;-webkit-text-stroke:0.2px #1a1a1a;"><span class="c">脚本</span>(R)</div>
<svg style="left:133.8px;top:266.5px" width="4" height="6"><path d="M0 0L2.8 2.3L0 4.6Z" fill="#1a1a1a"/></svg>
<div class="t" style="left:26px;top:275.80px;font-size:7.1px;color:#1a1a1a;-webkit-text-stroke:0.2px #1a1a1a;"><span class="c">导入</span>(M)</div>
<svg style="left:133.8px;top:277.3px" width="4" height="6"><path d="M0 0L2.8 2.3L0 4.6Z" fill="#1a1a1a"/></svg>
<div style="left:17px;top:285.8px;width:122.19999999999999px;height:0.9px;background:#d4d4d4;"></div>
<div class="t" style="left:26px;top:289.20px;font-size:7.1px;color:#1a1a1a;-webkit-text-stroke:0.2px #1a1a1a;"><span class="c">文件简介</span>(F)<span class="e">...</span></div>
<div class="t" style="right:568.7px;top:289.20px;font-size:7.1px;text-align:right;color:#1a1a1a;-webkit-text-stroke:0.2px #1a1a1a;">Alt+Shift+Ctrl+I</div>
<div style="left:17px;top:300.2px;width:122.19999999999999px;height:0.9px;background:#d4d4d4;"></div>
<div class="t" style="left:26px;top:303.80px;font-size:7.1px;color:#1a1a1a;-webkit-text-stroke:0.2px #1a1a1a;"><span class="c">打印</span>(P)<span class="e">...</span></div>
<div class="t" style="right:568.7px;top:303.80px;font-size:7.1px;text-align:right;color:#1a1a1a;-webkit-text-stroke:0.2px #1a1a1a;">Ctrl+P</div>
<div class="t" style="left:26px;top:314.60px;font-size:7.1px;color:#1a1a1a;-webkit-text-stroke:0.2px #1a1a1a;"><span class="c">打印一份</span>(Y)</div>
<div class="t" style="right:568.7px;top:314.60px;font-size:7.1px;text-align:right;color:#1a1a1a;-webkit-text-stroke:0.2px #1a1a1a;">Alt+Shift+Ctrl+P</div>
<div style="left:17px;top:325.2px;width:122.19999999999999px;height:0.9px;background:#d4d4d4;"></div>
<div class="t" style="left:26px;top:329.20px;font-size:7.1px;color:#1a1a1a;-webkit-text-stroke:0.2px #1a1a1a;"><span class="c">退出</span>(X)</div>
<div class="t" style="right:568.7px;top:329.20px;font-size:7.1px;text-align:right;color:#1a1a1a;-webkit-text-stroke:0.2px #1a1a1a;">Ctrl+Q</div>
<div style="left:140.3px;top:169.8px;width:166.2px;height:166.5px;background:rgba(0,0,0,0.35);filter:blur(1px);"></div>
<div style="left:138.8px;top:168.3px;width:166.2px;height:166.5px;background:#f0f0f0;border:0.8px solid #fdfdfd;border-left-color:#d0d0d0;"></div>
<div style="left:139.3px;top:168.70000000000002px;width:164.7px;height:10.5px;background:#0a78d6;"></div>
<div class="t" style="left:148px;top:170.10px;font-size:7.1px;color:#ffffff;-webkit-text-stroke:0.2px #ffffff;"><span class="c">快速导出为</span> PNG</div>
<div class="t" style="left:148px;top:181.20px;font-size:7.1px;color:#1a1a1a;-webkit-text-stroke:0.2px #1a1a1a;"><span class="c">导出为</span><span class="e">...</span></div>
<div class="t" style="right:404.5px;top:181.20px;font-size:7.1px;text-align:right;color:#1a1a1a;-webkit-text-stroke:0.2px #1a1a1a;">Alt+Shift+Ctrl+W</div>
<div style="left:139.8px;top:192px;width:164.2px;height:0.9px;background:#d4d4d4;"></div>
<div class="t" style="left:148px;top:195.70px;font-size:7.1px;color:#1a1a1a;-webkit-text-stroke:0.2px #1a1a1a;"><span class="c">导出首选项</span><span class="e">...</span></div>
<div style="left:139.8px;top:206.4px;width:164.2px;height:0.9px;background:#d4d4d4;"></div>
<div class="t" style="left:148px;top:209.80px;font-size:7.1px;color:#1a1a1a;-webkit-text-stroke:0.2px #1a1a1a;"><span class="c">存储为</span> Web <span class="c">所用格式（旧版）</span><span class="e">...</span></div>
<div class="t" style="right:404.5px;top:209.80px;font-size:7.1px;text-align:right;color:#1a1a1a;-webkit-text-stroke:0.2px #1a1a1a;">Alt+Shift+Ctrl+S</div>
<div style="left:139.8px;top:221px;width:164.2px;height:0.9px;background:#d4d4d4;"></div>
<div class="t" style="left:148px;top:224.70px;font-size:7.1px;color:#1a1a1a;-webkit-text-stroke:0.2px #1a1a1a;"><span class="c">导出为</span> Aero<span class="e">...</span></div>
<div class="t" style="left:148px;top:235.50px;font-size:7.1px;color:#8c8c8c;-webkit-text-stroke:0.2px #8c8c8c;"><span class="c">画板至文件</span><span class="e">...</span></div>
<div class="t" style="left:148px;top:246.20px;font-size:7.1px;color:#8c8c8c;-webkit-text-stroke:0.2px #8c8c8c;"><span class="c">将画板导出到</span> PDF<span class="e">...</span></div>
<div class="t" style="left:148px;top:257.00px;font-size:7.1px;color:#1a1a1a;-webkit-text-stroke:0.2px #1a1a1a;"><span class="c">将图层导出到文件</span><span class="e">...</span></div>
<div class="t" style="left:148px;top:267.70px;font-size:7.1px;color:#8c8c8c;-webkit-text-stroke:0.2px #8c8c8c;"><span class="c">将图层复合导出到</span> PDF<span class="e">...</span></div>
<div class="t" style="left:148px;top:278.40px;font-size:7.1px;color:#8c8c8c;-webkit-text-stroke:0.2px #8c8c8c;"><span class="c">图层复合导出到文件</span><span class="e">...</span></div>
<div class="t" style="left:148px;top:289.20px;font-size:7.1px;color:#1a1a1a;-webkit-text-stroke:0.2px #1a1a1a;"><span class="c">颜色查找表</span><span class="e">...</span></div>
<div style="left:139.8px;top:300px;width:164.2px;height:0.9px;background:#d4d4d4;"></div>
<div class="t" style="left:148px;top:303.80px;font-size:7.1px;color:#8c8c8c;-webkit-text-stroke:0.2px #8c8c8c;"><span class="c">数据组作为文件</span>(D)<span class="e">...</span></div>
<div class="t" style="left:148px;top:314.50px;font-size:7.1px;color:#1a1a1a;-webkit-text-stroke:0.2px #1a1a1a;"><span class="c">路径到</span> Illustrator<span class="e">...</span></div>
<div class="t" style="left:148px;top:325.20px;font-size:7.1px;color:#1a1a1a;-webkit-text-stroke:0.2px #1a1a1a;"><span class="c">渲染视频</span><span class="e">...</span></div>
<svg style="left:237px;top:175.3px" width="9" height="11"><path d="M0.6 0.6V8.6L2.5 6.8L3.9 9.6L5.1 9L3.8 6.3H6.5Z" fill="#f8f8f8" stroke="#333" stroke-width="0.6" stroke-linejoin="round"/></svg>
</body></html>
